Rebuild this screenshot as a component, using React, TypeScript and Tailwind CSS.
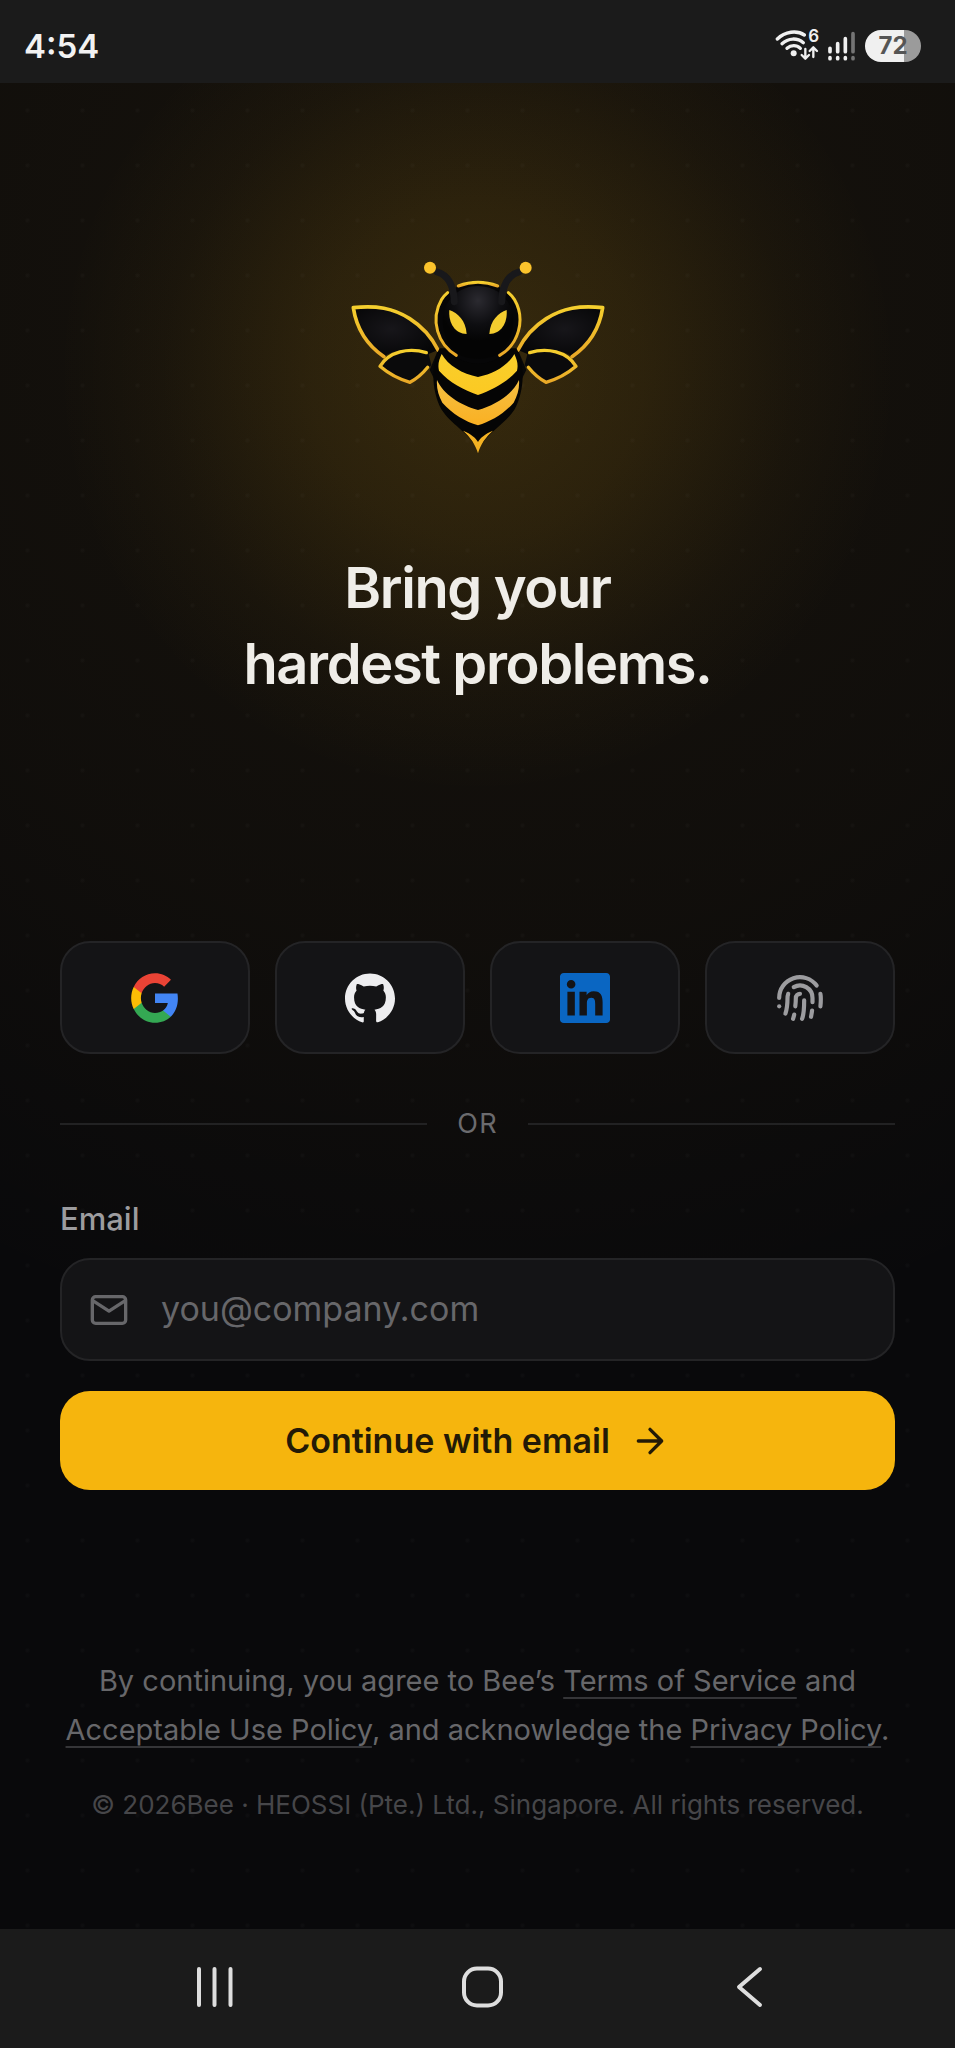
import React from "react";

const socialClass =
  "flex h-[113px] items-center justify-center rounded-[30px] border-2 border-[#242426] bg-[#141416]";

function StatusBar() {
  return (
    <header className="flex h-[83px] items-center justify-between bg-[#1b1b1b] pr-[34px] pl-6 pt-[9px]">
      <time className="text-[33px] leading-10 font-semibold text-[#f2f2f2]">4:54</time>
      <div className="flex items-center gap-2">
        <div className="relative">
          <svg width="44" height="34" viewBox="0 0 132 102" fill="none" strokeLinecap="round" aria-label="Wi-Fi">
            <g stroke="#f0f0f0" strokeWidth="10">
              <path d="M7 30C30 7 66 3 88 18" />
              <path d="M21 44C40 26 67 26 85 41" />
              <path d="M36 58c12-11 29-11 40 0" />
            </g>
            <circle cx="56" cy="73" r="9" fill="#f0f0f0" />
            <g stroke="#f0f0f0" strokeWidth="7" strokeLinejoin="round">
              <path d="M91 60v28M80 78l11 11 11-11" />
              <path d="M115 84V55M104 66l11-11 11 11" />
            </g>
          </svg>
          <span className="absolute -top-px right-0 text-[17px] leading-4 font-semibold text-[#f0f0f0]">6</span>
        </div>
        <svg width="30" height="34" viewBox="0 0 90 102" strokeLinecap="round" strokeWidth="11" fill="none" aria-label="Signal">
          <g stroke="#f0f0f0">
            <path d="M9 58v10M32 44v24M55 29v39" />
            <path d="M9 86v3M32 86v3M55 86v3" />
          </g>
          <path d="M78 14v54M78 86v3" stroke="#747474" />
        </svg>
        <div className="flex h-8 w-14 items-center justify-center rounded-full bg-[linear-gradient(90deg,#f0f0f0_70%,#9b9b9b_70%)] text-2xl leading-8 font-bold text-[#555555]">
          72
        </div>
      </div>
    </header>
  );
}

function WingPair() {
  return (
    <g strokeLinejoin="round" strokeLinecap="round">
      <path d="M325 330L300 390 330 450 345 340Z" fill="#080808" />
      <path d="M70 203C150 190 205 208 252 243C290 272 312 300 325 330L290 345C235 322 190 330 163 350C112 315 82 262 70 203Z" fill="url(#wing)" />
      <path d="M325 330C305 290 275 258 240 236C190 204 140 196 71 203C80 262 112 315 163 350" stroke="url(#gold)" strokeWidth="11" fill="none" />
      <path d="M296 338C240 322 180 332 151 379C178 402 208 418 241 427C265 415 285 400 305 375Z" fill="#0a0a0b" />
      <path d="M290 338C238 322 178 334 151 379C178 402 208 418 241 427C262 416 278 402 294 382" stroke="url(#gold)" strokeWidth="10" fill="none" />
    </g>
  );
}

function BeeLogo() {
  return (
    <svg className="h-[230px] w-[300px]" viewBox="-5 0 900 690" role="img" aria-label="Bee">
      <defs>
        <linearGradient id="gold" x1="0" y1="0" x2="0" y2="1">
          <stop offset="0" stopColor="#f5cf2e" />
          <stop offset="1" stopColor="#e9a827" />
        </linearGradient>
        <linearGradient id="stripe" x1="0" y1="0" x2="0" y2="1">
          <stop offset="0" stopColor="#f8cf2c" />
          <stop offset="1" stopColor="#fcc922" />
        </linearGradient>
        <linearGradient id="stripeLow" x1="0" y1="0" x2="0" y2="1">
          <stop offset="0" stopColor="#f4c043" />
          <stop offset="1" stopColor="#fab022" />
        </linearGradient>
        <radialGradient id="wing" cx="0.45" cy="0.45" r="0.6">
          <stop offset="0" stopColor="#17161a" />
          <stop offset="1" stopColor="#060607" />
        </radialGradient>
        <radialGradient id="head" cx="0.5" cy="0.2" r="0.55">
          <stop offset="0" stopColor="#2b2a30" />
          <stop offset="0.6" stopColor="#0e0e11" />
          <stop offset="1" stopColor="#040404" />
        </radialGradient>
      </defs>
      <WingPair />
      <g transform="translate(890 0) scale(-1 1)">
        <WingPair />
      </g>
      <path d="M330 325C304 370 304 450 335 508C365 555 412 572 445 630C478 572 525 555 555 508C586 450 586 370 560 325Z" fill="#050505" />
      <path d="M400 572C425 582 438 594 445 606C452 594 465 582 490 572C468 592 453 612 445 640C437 612 422 592 400 572Z" fill="#f4b223" />
      <circle cx="445" cy="247" r="124" fill="#060607" />
      <path d="M380 346C325 315 300 240 336 178Q344 166 354 158" fill="none" stroke="url(#gold)" strokeWidth="9" strokeLinecap="round" />
      <path d="M510 346C565 315 590 240 554 178Q546 166 536 158" fill="none" stroke="url(#gold)" strokeWidth="9" strokeLinecap="round" />
      <path d="M386 138Q445 116 504 138" fill="none" stroke="url(#gold)" strokeWidth="9" strokeLinecap="round" />
      <path d="M445 138C500 138 540 176 550 225C558 280 530 335 485 352Q445 362 405 352C360 335 332 280 340 225C350 176 390 138 445 138Z" fill="url(#head)" />
      <g fill="none" stroke="#18181b" strokeWidth="21" strokeLinecap="round">
        <path d="M323 96C356 106 372 138 374 185" />
        <path d="M567 96C534 106 518 138 516 185" />
      </g>
      <circle cx="301" cy="83" r="18" fill="#fbc32c" />
      <circle cx="588" cy="83" r="18" fill="#fbc32c" />
      <path d="M359 210C384 219 408 240 411 282C376 281 356 250 359 210Z" fill="#f4cd2f" />
      <path d="M531 210C506 219 482 240 479 282C514 281 534 250 531 210Z" fill="#f4cd2f" />
      <path d="M336 342C355 376 398 402 445 411C492 402 535 376 554 342C563 360 566 376 562 392C530 428 488 450 445 465C402 450 360 428 328 392C324 376 327 360 336 342Z" fill="url(#stripe)" />
      <path d="M322 420C340 462 393 496 445 510C497 496 550 462 568 420C570 444 564 466 552 488C522 522 482 545 445 556C408 545 368 522 338 488C326 466 320 444 322 420Z" fill="url(#stripeLow)" />
    </svg>
  );
}

function GoogleIcon() {
  return (
    <svg width="52" height="54" viewBox="0 0 24 24" preserveAspectRatio="none" aria-hidden="true">
      <path fill="#4285F4" d="M22.56 12.25c0-.78-.07-1.53-.2-2.25H12v4.26h5.92c-.26 1.37-1.04 2.53-2.21 3.31v2.77h3.57c2.08-1.92 3.28-4.74 3.28-8.09z" />
      <path fill="#34A853" d="M12 23c2.97 0 5.46-.98 7.28-2.66l-3.57-2.77c-.98.66-2.23 1.06-3.71 1.06-2.86 0-5.29-1.93-6.16-4.53H2.18v2.84C3.99 20.53 7.7 23 12 23z" />
      <path fill="#FBBC05" d="M5.84 14.09c-.22-.66-.35-1.36-.35-2.09s.13-1.43.35-2.09V7.07H2.18C1.43 8.55 1 10.22 1 12s.43 3.45 1.18 4.93l3.66-2.84z" />
      <path fill="#EA4335" d="M12 5.38c1.62 0 3.06.56 4.21 1.64l3.15-3.15C17.45 2.09 14.97 1 12 1 7.7 1 3.99 3.47 2.18 7.07l3.66 2.84c.87-2.6 3.3-4.53 6.16-4.53z" />
    </svg>
  );
}

function GithubIcon() {
  return (
    <svg width="50" height="50" viewBox="0 0 24 24" fill="#ededef" aria-hidden="true">
      <path d="M12 .297c-6.63 0-12 5.373-12 12 0 5.303 3.438 9.8 8.205 11.385.6.113.82-.258.82-.577 0-.285-.01-1.04-.015-2.04-3.338.724-4.042-1.61-4.042-1.61C4.422 18.07 3.633 17.7 3.633 17.7c-1.087-.744.084-.729.084-.729 1.205.084 1.838 1.236 1.838 1.236 1.07 1.835 2.809 1.305 3.495.998.108-.776.417-1.305.76-1.605-2.665-.3-5.466-1.332-5.466-5.93 0-1.31.465-2.38 1.235-3.22-.135-.303-.54-1.523.105-3.176 0 0 1.005-.322 3.3 1.23.96-.267 1.98-.399 3-.405 1.02.006 2.04.138 3 .405 2.28-1.552 3.285-1.23 3.285-1.23.645 1.653.24 2.873.12 3.176.765.84 1.23 1.91 1.23 3.22 0 4.61-2.805 5.625-5.475 5.92.42.36.81 1.096.81 2.22 0 1.606-.015 2.896-.015 3.286 0 .315.21.69.825.57C20.565 22.092 24 17.592 24 12.297c0-6.627-5.373-12-12-12" />
    </svg>
  );
}

function LinkedinIcon() {
  return (
    <svg width="50" height="50" viewBox="0 0 24 24" fill="#0a66c2" aria-hidden="true">
      <path d="M20.447 20.452h-3.554v-5.569c0-1.328-.027-3.037-1.852-3.037-1.853 0-2.136 1.445-2.136 2.939v5.667H9.351V9h3.414v1.561h.046c.477-.9 1.637-1.85 3.37-1.85 3.601 0 4.267 2.37 4.267 5.455v6.286zM5.337 7.433a2.062 2.062 0 0 1-2.063-2.065 2.064 2.064 0 1 1 2.063 2.065zm1.782 13.019H3.555V9h3.564v11.452zM22.225 0H1.771C.792 0 0 .774 0 1.729v20.542C0 23.227.792 24 1.771 24h20.451C23.2 24 24 23.227 24 22.271V1.729C24 .774 23.2 0 22.222 0h.003z" />
    </svg>
  );
}

function FingerprintIcon() {
  return (
    <svg width="50" height="50" viewBox="0 0 24 24" fill="none" stroke="#9c9c9f" strokeWidth="2" strokeLinecap="round" strokeLinejoin="round" aria-hidden="true">
      <path d="M12 10a2 2 0 0 0-2 2c0 1.02-.1 2.51-.26 4" />
      <path d="M14 13.12c0 2.38 0 6.38-1 8.88" />
      <path d="M17.29 21.02c.12-.6.43-2.3.5-3.02" />
      <path d="M2 12a10 10 0 0 1 18-6" />
      <path d="M2 16h.01" />
      <path d="M21.8 16c.2-2 .131-5.354 0-6" />
      <path d="M5 19.5C5.5 18 6 15 6 12a6 6 0 0 1 .34-2" />
      <path d="M8.65 22c.21-.66.45-1.32.57-2" />
      <path d="M9 6.8a6 6 0 0 1 9 5.2v2" />
    </svg>
  );
}

const providers = [
  { name: "Google", Icon: GoogleIcon },
  { name: "GitHub", Icon: GithubIcon },
  { name: "LinkedIn", Icon: LinkedinIcon },
  { name: "passkey", Icon: FingerprintIcon },
];

const linkClass = "underline decoration-[#353538] decoration-2 underline-offset-[6px]";

export default function App() {
  return (
    <div className="flex min-h-screen flex-col bg-[#09090b] font-['Inter',sans-serif]">
      <StatusBar />
      <main className="flex flex-1 flex-col bg-[radial-gradient(circle_at_center,rgba(255,255,255,0.02)_1px,transparent_3px),radial-gradient(circle_420px_at_50%_290px,rgba(245,180,20,0.15),rgba(245,180,20,0.10)_40%,rgba(245,180,20,0.03)_75%,transparent),radial-gradient(ellipse_1100px_1100px_at_50%_200px,rgba(245,170,20,0.06),rgba(245,170,20,0.03)_60%,transparent)] bg-[size:55px_55px,100%_100%,100%_100%] px-[60px]">
        <section className="flex flex-col items-center pt-[157px]">
          <BeeLogo />
          <h1 className="mt-20 text-center text-[56px] leading-[76px] font-semibold tracking-tight text-[#efede8]">
            Bring your
            <br />
            hardest problems.
          </h1>
        </section>

        <div className="mt-[239px] grid grid-cols-4 gap-[25px]">
          {providers.map(({ name, Icon }) => (
            <button key={name} type="button" aria-label={`Continue with ${name}`} className={socialClass}>
              <Icon />
            </button>
          ))}
        </div>

        <div className="mt-[50px] flex items-center gap-[30px]">
          <span className="h-[2px] flex-1 bg-[#222223]" />
          <span className="text-[27px] leading-10 tracking-wider text-[#6b6b6e]">OR</span>
          <span className="h-[2px] flex-1 bg-[#222223]" />
        </div>

        <form className="mt-[55px] flex flex-col" onSubmit={(e) => e.preventDefault()}>
          <label htmlFor="email" className="text-[31px] leading-10 font-medium text-[#9c9c9f]">
            Email
          </label>
          <div className="mt-[19px] flex h-[103px] items-center gap-[32px] rounded-[30px] border-2 border-[#242426] bg-[#141416] px-[27px]">
            <svg width="40" height="40" viewBox="0 0 24 24" fill="none" stroke="#67676a" strokeWidth="2" strokeLinecap="round" strokeLinejoin="round" className="shrink-0" aria-hidden="true">
              <rect x="2" y="4" width="20" height="16" rx="2" />
              <path d="m2.5 6.5 9.5 6.2 9.5-6.2" />
            </svg>
            <input
              id="email"
              type="email"
              placeholder="you@company.com"
              className="h-12 min-w-0 flex-1 bg-transparent pb-[2px] text-[34px] text-[#ededef] outline-none placeholder:text-[#67676a]"
            />
          </div>
          <button
            type="submit"
            className="mt-[30px] flex h-[99px] items-center justify-center gap-5 rounded-[30px] bg-[#f6b50d] text-[34px] leading-[48px] font-semibold text-[#231a06]"
          >
            Continue with email
            <svg width="40" height="40" viewBox="0 0 24 24" fill="none" stroke="currentColor" strokeWidth="2" strokeLinecap="round" strokeLinejoin="round" aria-hidden="true">
              <path d="M5 12h14M12 5l7 7-7 7" />
            </svg>
          </button>
        </form>

        <footer className="-mx-2 mt-[166px] pb-[100px] text-center">
          <p className="text-[29px] leading-[49px] text-[#67676a]">
            By continuing, you agree to Bee’s{" "}
            <a href="#terms" className={linkClass}>Terms of Service</a> and{" "}
            <a href="#use" className={linkClass}>Acceptable Use Policy</a>, and acknowledge the{" "}
            <a href="#privacy" className={linkClass}>Privacy Policy</a>.
          </p>
          <p className="mt-[31px] text-[26px] leading-10 text-[#464649]">
            © 2026Bee · HEOSSI (Pte.) Ltd., Singapore. All rights reserved.
          </p>
        </footer>
      </main>

      <nav className="flex h-[119px] items-center justify-between bg-[#1b1b1b] px-[192px] pb-1" aria-label="System navigation">
        <button type="button" aria-label="Recent apps">
          <svg width="44" height="44" viewBox="0 0 44 44" stroke="#dedede" strokeWidth="4" strokeLinecap="round" fill="none">
            <path d="M7 4v36M22.5 4v36M38.500 4v36" />
          </svg>
        </button>
        <button type="button" aria-label="Home">
          <svg width="52" height="44" viewBox="0 0 52 44" stroke="#dedede" strokeWidth="4" fill="none">
            <rect x="12" y="3.5" width="37" height="37" rx="13" />
          </svg>
        </button>
        <button type="button" aria-label="Back">
          <svg width="44" height="44" viewBox="0 0 44 44" stroke="#dedede" strokeWidth="4" strokeLinecap="round" strokeLinejoin="round" fill="none">
            <path d="M41 4L20 22l21 18" />
          </svg>
        </button>
      </nav>
    </div>
  );
}
